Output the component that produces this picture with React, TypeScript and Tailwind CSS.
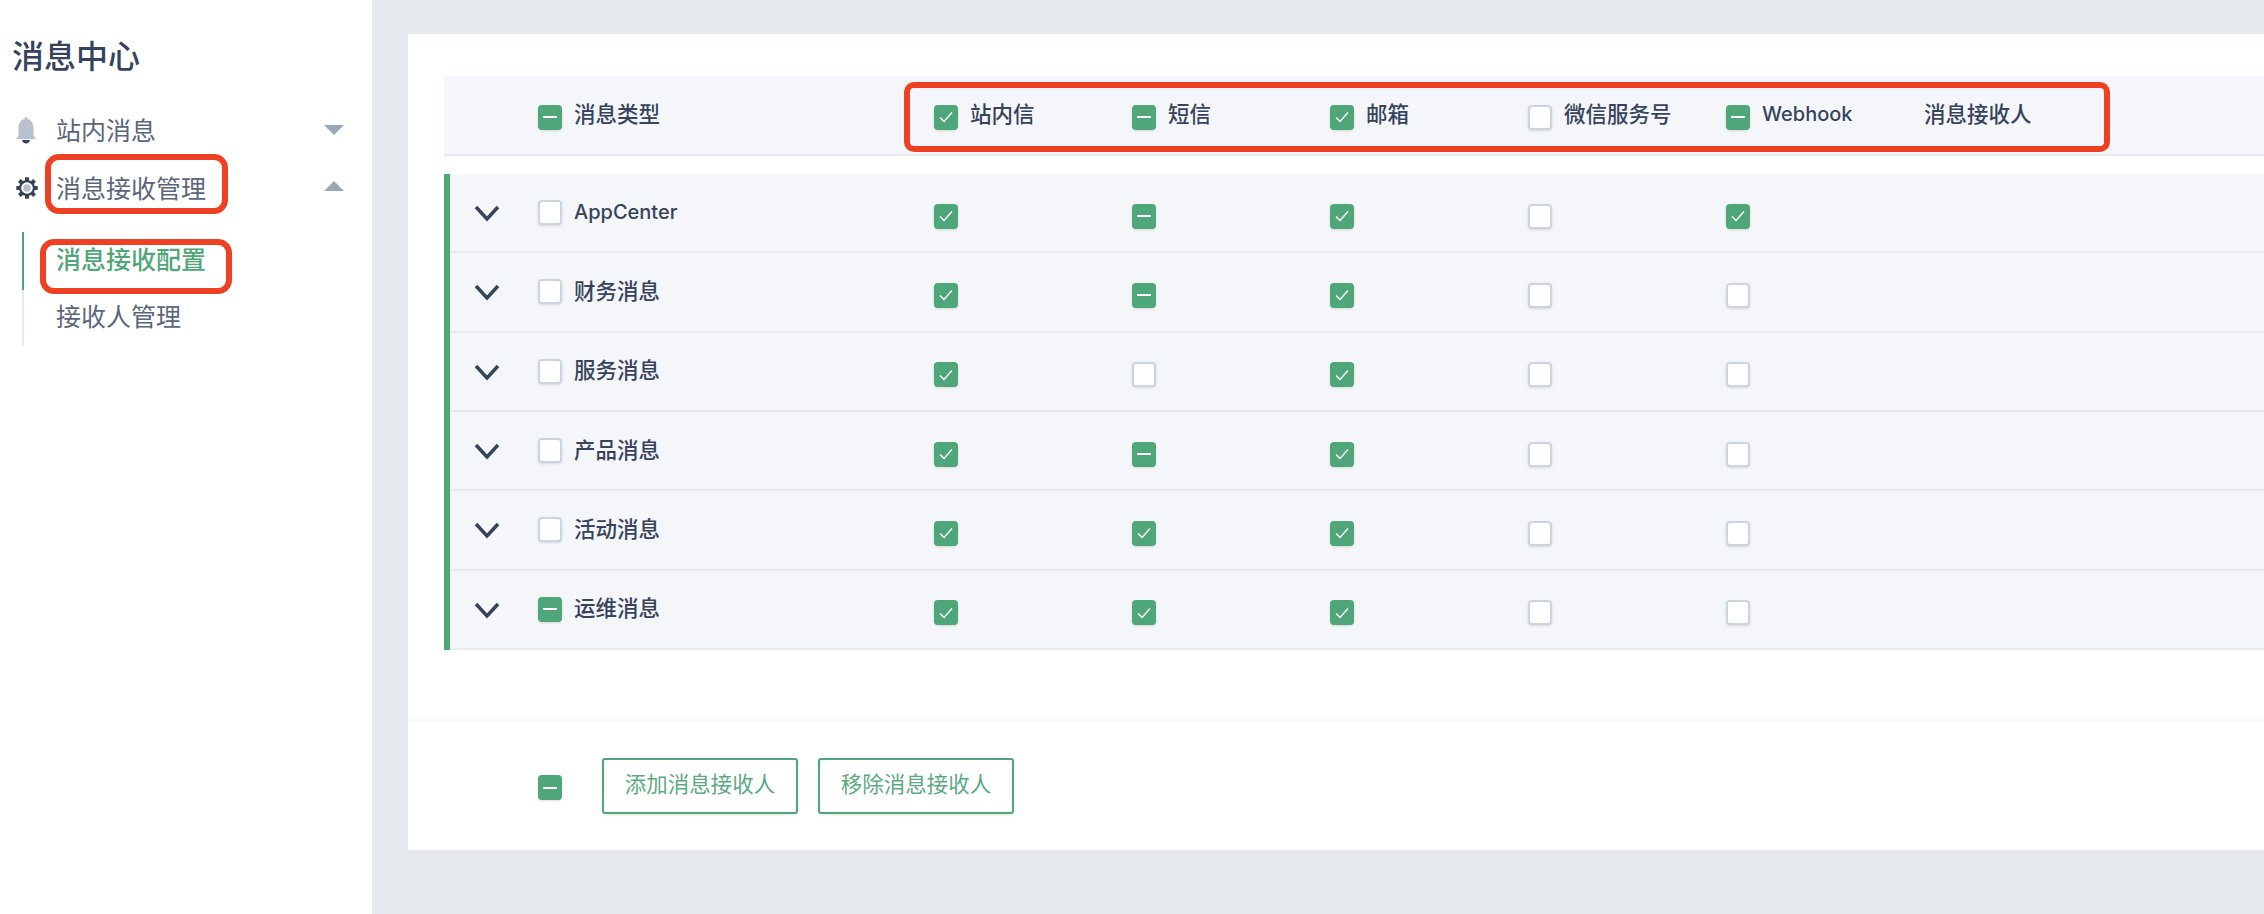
import React from 'react';

type CheckState = 'on' | 'off' | 'mixed';

interface MessageRow {
  name: string;
  state: CheckState;
  channels: CheckState[];
}

const columns: { label: string; state?: CheckState }[] = [
  { label: '站内信', state: 'on' },
  { label: '短信', state: 'mixed' },
  { label: '邮箱', state: 'on' },
  { label: '微信服务号', state: 'off' },
  { label: 'Webhook', state: 'mixed' },
  { label: '消息接收人' },
];

const rows: MessageRow[] = [
  { name: 'AppCenter', state: 'off', channels: ['on', 'mixed', 'on', 'off', 'on'] },
  { name: '财务消息', state: 'off', channels: ['on', 'mixed', 'on', 'off', 'off'] },
  { name: '服务消息', state: 'off', channels: ['on', 'off', 'on', 'off', 'off'] },
  { name: '产品消息', state: 'off', channels: ['on', 'mixed', 'on', 'off', 'off'] },
  { name: '活动消息', state: 'off', channels: ['on', 'on', 'on', 'off', 'off'] },
  { name: '运维消息', state: 'mixed', channels: ['on', 'on', 'on', 'off', 'off'] },
];

// Latin labels run a little smaller than the Chinese ones
const labelClass = (text: string) => (/^[A-Za-z]+$/.test(text) ? 'text-[20px]' : 'text-[21.5px]');

const Checkbox = ({ state }: { state: CheckState }) => {
  if (state === 'off') {
    return <span className="block w-[24px] h-[25px] shrink-0 rounded-[4px] border-2 border-[#cbd5e0] bg-white shadow-sm" />;
  }
  return (
    <span className="flex items-center justify-center w-[24px] h-[25px] shrink-0 rounded-[4px] bg-[#4fa678] shadow-sm">
      {state === 'on' ? (
        <svg width="16" height="16" viewBox="0 0 16 16" fill="none">
          <path d="M2 8.500L6 12.500L14 3.500" stroke="#fff" strokeWidth="1.400" />
        </svg>
      ) : (
        <span className="block w-[14px] h-[2px] bg-white" />
      )}
    </span>
  );
};

const BellIcon = () => (
  <svg width="20" height="27" viewBox="0 0 20 27">
    <path d="M10 0c1 0 1.500.8 1.700 1.900C15.800 3 17.500 6.800 17.500 11v7.500L20 22H0l2.500-3.500V11c0-4.200 1.700-8 5.800-9.100C8.500.8 9 0 10 0z" fill="#b6c1cd" />
    <path d="M6 23h8c-.3 2-2 3.500-4 3.500S6.300 25 6 23z" fill="#36435c" />
  </svg>
);

const GearIcon = () => (
  <svg width="22" height="22" viewBox="0 0 22 22">
    {[0, 45, 90, 135, 180, 225, 270, 315].map((deg) => (
      <rect key={deg} x="9" y="0.300" width="4" height="5" fill="#36435c" transform={`rotate(${deg} 11 11)`} />
    ))}
    <circle cx="11" cy="11" r="8" fill="#36435c" />
    <circle cx="11" cy="11" r="5.800" fill="#fff" />
    <circle cx="11" cy="11" r="3.800" fill="#b6c1cd" />
  </svg>
);

const Caret = ({ up }: { up?: boolean }) => (
  <svg width="20" height="10" viewBox="0 0 20 10">
    <path d={up ? 'M10 0L20 10H0Z' : 'M0 0H20L10 10Z'} fill="#9ba7b6" />
  </svg>
);

const App = () => {
  return (
    <div className="relative flex h-[914px] w-[2264px] overflow-hidden bg-[#e5e9ee] text-[#36435c] font-['Inter','Noto_Sans_CJK_SC',sans-serif]">
      {/* Sidebar */}
      <aside className="w-[372px] shrink-0 bg-white pt-[33px]">
        <h1 className="pl-[12px] text-[32px] leading-[48px] font-medium">消息中心</h1>
        <nav className="mt-[20px] text-[25px] text-[#5b667a]">
          <div className="flex h-[58px] items-center pr-[28px]">
            <span className="flex w-[56px] justify-center pr-[4px]"><BellIcon /></span>
            <span className="flex-1 pt-[3px]">站内消息</span>
            <Caret />
          </div>
          <div className="flex h-[58px] items-center pr-[28px]">
            <span className="flex w-[56px] justify-center pr-[2px]"><GearIcon /></span>
            <span className="flex-1 pt-[3px]">消息接收管理</span>
            <span className="mb-[4px]"><Caret up /></span>
          </div>
          <div className="ml-[22px] mt-[15px]">
            <div className="flex h-[58px] items-center border-l-2 border-[#4fa678] pl-[32px] font-medium text-[#4fa678]">消息接收配置</div>
            <div className="flex h-[56px] items-center border-l-2 border-[#e5e9ee] pl-[32px]">接收人管理</div>
          </div>
        </nav>
      </aside>

      {/* Main */}
      <main className="flex-1 pl-[36px] pt-[34px]">
        <div className="flex h-[816px] flex-col bg-white">
          <div className="flex-1 pl-[36px] pt-[42px] font-medium">
            <div className="flex h-[80px] items-center border-b-2 border-[#e6ebf0] bg-[#f4f6fa] pl-[94px]">
              <div className="flex w-[396px] items-center gap-[12px]">
                <span className="mt-[4px]"><Checkbox state="mixed" /></span>
                <span className={`-mt-[2px] ${labelClass('消息类型')}`}>消息类型</span>
              </div>
              {columns.map((col) => (
                <div key={col.label} className="flex w-[198px] items-center gap-[12px]">
                  {col.state && <span className="mt-[4px]"><Checkbox state={col.state} /></span>}
                  <span className={`-mt-[2px] ${labelClass(col.label)}`}>{col.label}</span>
                </div>
              ))}
            </div>

            <div className="mt-[18px] border-l-[6px] border-[#4fa678]">
              {rows.map((row) => (
                <div key={row.name} className="flex h-[79.33px] items-center border-b-2 border-[#e6ebf0] bg-[#f4f6fa]">
                  <span className="mt-[2px] flex w-[88px] justify-center pr-[14px]">
                    <svg width="26" height="17" viewBox="0 0 26 17" fill="none">
                      <path d="M2 2L13 14L24 2" stroke="#36435c" strokeWidth="3.500" />
                    </svg>
                  </span>
                  <div className="flex w-[396px] items-center gap-[12px]">
                    <Checkbox state={row.state} />
                    <span className={`-mt-[2px] ${labelClass(row.name)}`}>{row.name}</span>
                  </div>
                  {row.channels.map((state, i) => (
                    <div key={i} className="mt-[7px] w-[198px]"><Checkbox state={state} /></div>
                  ))}
                </div>
              ))}
            </div>
          </div>

          {/* Footer */}
          <div className="flex h-[128px] items-center gap-[40px] pl-[130px] shadow-[0_-3px_6px_rgba(228,233,238,0.45)]">
            <span className="mt-[3px]"><Checkbox state="mixed" /></span>
            <div className="flex gap-[20px]">
              <button className="h-[56px] w-[196px] rounded-[3px] border-2 border-[#4fa678] pb-[4px] text-[21.5px] text-[#5aa981] shadow-sm">添加消息接收人</button>
              <button className="h-[56px] w-[196px] rounded-[3px] border-2 border-[#4fa678] pb-[4px] text-[21.5px] text-[#5aa981] shadow-sm">移除消息接收人</button>
            </div>
          </div>
        </div>
      </main>

      {/* Red annotation boxes drawn over the screenshot */}
      <div className="absolute left-[45px] top-[154px] h-[60px] w-[183px] rounded-[14px] border-[6px] border-[#ee4023]" />
      <div className="absolute left-[40px] top-[239px] h-[55px] w-[192px] rounded-[14px] border-[6px] border-[#ee4023]" />
      <div className="absolute left-[904px] top-[82px] h-[70px] w-[1206px] rounded-[10px] border-[6px] border-[#ee4023]" />
    </div>
  );
};

export default App;
